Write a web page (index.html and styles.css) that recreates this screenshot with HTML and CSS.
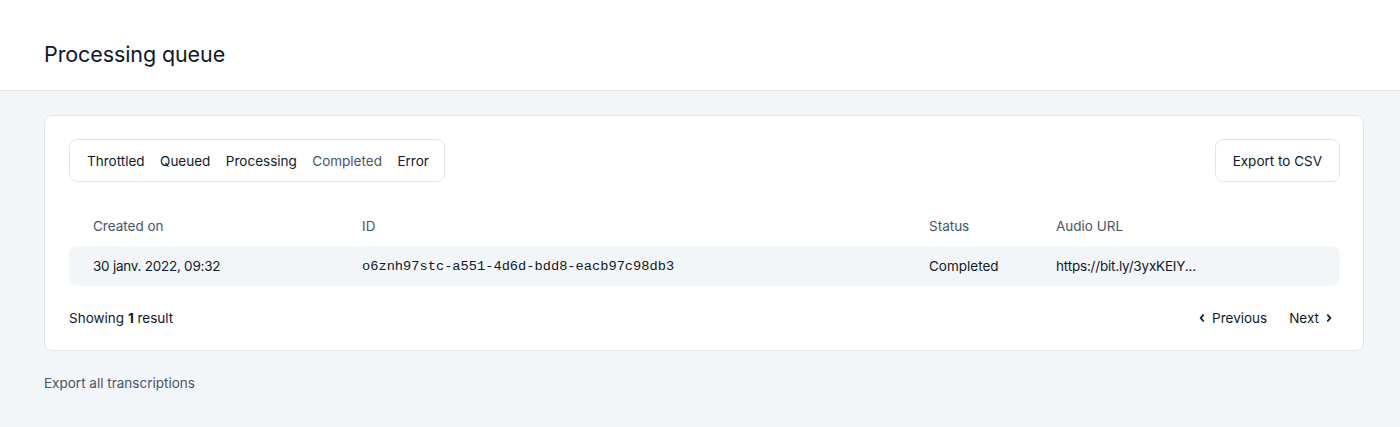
FILE: index.html
```html
<!DOCTYPE html>
<html>
<head>
<meta charset="utf-8">
<link rel="stylesheet" href="styles.css">
</head>
<body>
<header class="page-header">
  <h1 class="title">Processing queue</h1>
</header>
<main class="content">
  <section class="card">
    <div class="toolbar">
      <nav class="tabs">
        <span class="tab">Throttled</span>
        <span class="tab">Queued</span>
        <span class="tab">Processing</span>
        <span class="tab tab-active">Completed</span>
        <span class="tab">Error</span>
      </nav>
      <button class="btn">Export to CSV</button>
    </div>
    <div class="table">
      <div class="thead">
        <span>Created on</span>
        <span>ID</span>
        <span>Status</span>
        <span>Audio URL</span>
      </div>
      <div class="trow">
        <span class="date">30 janv. 2022, 09:32</span>
        <span class="mono">o6znh97stc-a551-4d6d-bdd8-eacb97c98db3</span>
        <span>Completed</span>
        <span class="url">https://bit.ly/3yxKEIY...</span>
      </div>
    </div>
    <div class="footer">
      <span class="count">Showing <b>1</b> result</span>
      <div class="pager">
        <span class="pg"><svg class="chev" viewBox="0 0 10 10" width="10" height="10"><path d="M6.2 2.2 L3.6 5 L6.2 7.8" fill="none" stroke="#111827" stroke-width="1.8" stroke-linecap="round" stroke-linejoin="round"/></svg>Previous</span>
        <span class="pg">Next<svg class="chev" viewBox="0 0 10 10" width="10" height="10"><path d="M3.8 2.2 L6.4 5 L3.8 7.8" fill="none" stroke="#111827" stroke-width="1.8" stroke-linecap="round" stroke-linejoin="round"/></svg></span>
      </div>
    </div>
  </section>
  <a class="export-all">Export all transcriptions</a>
</main>
</body>
</html>
```
FILE: styles.css
```css
* { box-sizing: border-box; }
html, body { margin: 0; padding: 0; }
body {
  font-family: Inter, "Noto Sans", sans-serif;
  font-size: 13.5px;
  color: #111827;
  background: #f3f6f9;
  min-height: 427px;
}
.page-header {
  background: #fff;
  height: 91px;
  border-bottom: 1px solid #e3e7ec;
  display: flex;
  align-items: center;
  padding: 0 44px;
}
.title {
  margin: 0;
  margin-top: 17px;
  font-size: 21.5px;
  font-weight: 400;
  color: #0f172a;
  letter-spacing: -0.1px;
}
.content {
  padding: 24px 36px 0 44px;
}
.card {
  background: #fff;
  border: 1px solid #e2e6eb;
  border-radius: 8px;
  padding: 23px 24px 24px 24px;
}
.toolbar {
  display: flex;
  justify-content: space-between;
  align-items: center;
}
.tabs {
  display: flex;
  gap: 15.5px;
  height: 43px;
  align-items: center;
  padding: 0 15px 0 17px;
  border: 1px solid #e2e6eb;
  border-radius: 8px;
}
.tab { color: #111827; }
.tab-active { color: #475569; }
.btn {
  font: inherit;
  color: #111827;
  background: #fff;
  border: 1px solid #e2e6eb;
  border-radius: 8px;
  height: 43px;
  padding: 0 17px;
  margin-right: -1px;
}
.table { margin-top: 24px; }
.thead, .trow {
  display: grid;
  grid-template-columns: 269px 567px 127px 1fr;
  padding-left: 24px;
  align-items: center;
  height: 40px;
}
.thead { color: #475569; }
.trow {
  background: #f3f6f9;
  border-radius: 8px;
  color: #111827;
  margin-right: -1px;
}
.date { letter-spacing: -0.25px; }
.url { letter-spacing: -0.2px; }
.mono {
  font-family: "Liberation Mono", "DejaVu Sans Mono", monospace;
  font-size: 13.7px;
  color: #111827;
}
.footer {
  margin-top: 24px;
  display: flex;
  justify-content: space-between;
  align-items: center;
  line-height: 16px;
}
.count b { font-weight: 700; }
.pager {
  display: flex;
  gap: 22px;
  margin-right: 5px;
}
.pg {
  display: flex;
  align-items: center;
  gap: 5px;
}
.export-all {
  display: block;
  margin-top: 24px;
  color: #475569;
  line-height: 16px;
}
```
